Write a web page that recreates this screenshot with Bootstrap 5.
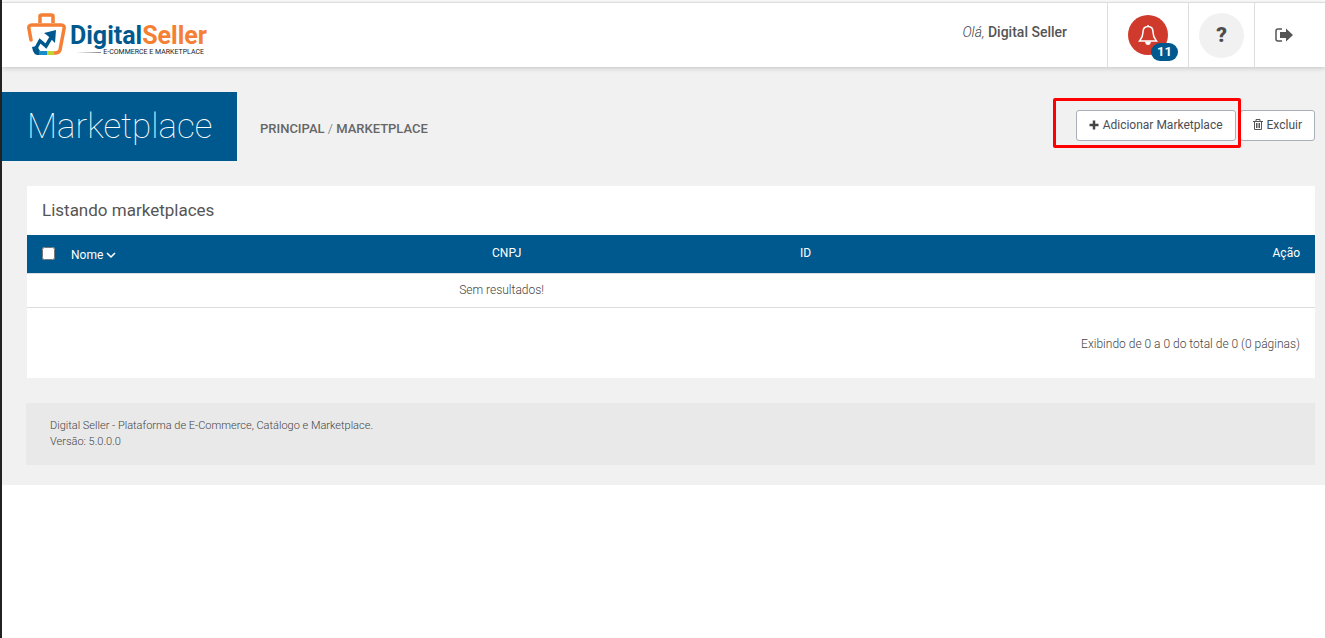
<!DOCTYPE html>
<html lang="pt-br">
<head>
<meta charset="utf-8">
<meta name="viewport" content="width=device-width, initial-scale=1">
<title>Marketplace - Digital Seller</title>
<link href="https://cdn.jsdelivr.net/npm/bootstrap@5.3.0/dist/css/bootstrap.min.css" rel="stylesheet">
<style>
:root { --ds-blue: #00598e; --ds-orange: #f57f34; --ds-line: #ddd; }
body { font-family: Roboto, "Liberation Sans", sans-serif; font-size: 12px; font-weight: 300; line-height: 16px; color: #444; background: #fff; border-left: 2px solid #222; padding-top: 2px; min-height: 100vh; }
.top-bar { height: 65px; border-top: 1px solid var(--ds-line); box-shadow: 0 1px 5px rgba(0,0,0,.2); }
.brand-link { margin: 7px 0 0 24px; height: 46px; }
.brand-text { padding-top: 13px; }
.brand-name { font-family: Roboto, sans-serif; font-size: 25px; line-height: 25px; font-weight: 700; color: var(--ds-blue); }
.brand-name span { color: var(--ds-orange); }
.brand-tag { font-size: 7px; line-height: 8px; font-weight: 400; color: #222; padding-right: 3px; }
.brand-rule { height: 1px; flex: 1; margin: 0 2px 0 5px; background: linear-gradient(to right, transparent, #888); }
.greeting { font-size: 14px; line-height: 20px; padding: 19px 40px 0 0; }
.greeting strong { font-weight: 500; color: #555; }
.top-cell { border-left: 1px solid var(--ds-line); }
.cell-bell { width: 81px; } .cell-help { width: 66px; } .cell-exit { width: 71px; padding-right: 12px; }
.round-btn { border: 0; border-radius: 50%; padding: 0; }
.bell-btn { width: 40px; height: 40px; background: #cf3a2c; }
.bell-count { left: 23px; top: 28px; width: 27px; height: 18px; font-size: 13px; line-height: 18px; font-weight: 700; padding: 0; background: var(--ds-blue); }
.help-btn { width: 45px; height: 45px; background: #f1f1f1; color: #4d4d4d; font-size: 21px; font-weight: 900; line-height: 45px; }
.page-area { background: #f1f1f1; padding: 25px 10px 20px 0; }
.page-title { background: var(--ds-blue); color: #fff; font-size: 35px; font-weight: 100; line-height: 69px; width: 235px; padding-left: 25px; }
.crumbs { font-size: 13px; font-weight: 500; color: #666; margin: 4px 0 0 23px; }
.crumbs a { color: inherit; }
.tools { padding-bottom: 2px; }
.tool-btn { height: 31px; padding: 0 12px 2px; font-size: 12px; line-height: 28px; font-weight: 400; color: #4b4d52; background: #fff; border: 1px solid #a9afbb; border-radius: 3px; }
.tool-btn:hover { background: #f6f6f6; border-color: #a9afbb; }
.highlight { inset: -12px -5px -7px -23px; border: 3px solid #f00; border-radius: 2px; z-index: 2; pointer-events: none; }
.panel { margin: 25px 0 0 25px; background: #fff; }
.panel h2 { font-size: 17px; line-height: 49px; font-weight: 400; margin: 0; padding-left: 15px; color: #555; }
.list-table { table-layout: fixed; width: 100%; }
.list-table th { height: 38px; background: var(--ds-blue); color: #fff; font-weight: 400; padding: 0 15px 2px; }
.list-table td { height: 34px; border: 1px solid var(--ds-line); border-width: 1px 0; padding: 0; }
.list-table th:first-child { padding-bottom: 0; }
.list-table th:first-child input { width: 13px; height: 13px; display: block; margin: 0; }
.list-table th.col-name { padding: 2px 0 0 8px; }
.list-table th a { color: inherit; }
.result-count { padding: 28px 15px 26px; text-align: right; }
.foot { margin: 25px 0 0 24px; padding: 15px 24px; background: #e9e9e9; font-size: 11px; }
</style>
</head>
<body>
<header class="top-bar d-flex bg-white position-relative">
  <a href="#" class="brand-link d-flex text-decoration-none" aria-label="Digital Seller">
    <svg width="40" height="46" viewBox="0 0 40 46" fill="none" aria-hidden="true">
      <path d="M14 13V6Q14 5 16 5H25Q27 5 27 6V13" stroke="#f57f34" stroke-width="3.500"/>
      <path d="M5 30L3 19Q2 15 6 15H35Q39 15 38 19L34 40Q33 43 29 43H28" stroke="#f57f34" stroke-width="3.500" stroke-linecap="round"/>
      <path d="M9 40L14 31L20 36L26 26" stroke="#00598e" stroke-width="3.500"/>
      <path d="M18 23L30 20L29 33L25 29L22 26Z" fill="#00598e"/>
      <path d="M6 37L11 36L14 41V45H11Q8 44 7 41Z" fill="#00598e"/>
      <path d="M13 41H21V45H13Z" fill="#168dc9"/><path d="M21 41H28V45H21Z" fill="#bdd62f"/>
    </svg>
    <span class="brand-text d-flex flex-column ms-1">
      <span class="brand-name">Digital<span>Seller</span></span>
      <span class="d-flex align-items-center"><span class="brand-rule"></span><span class="brand-tag">E-COMMERCE E MARKETPLACE</span></span>
    </span>
  </a>
  <div class="greeting ms-auto"><em>Olá,</em> <strong>Digital Seller</strong></div>
  <div class="top-cell cell-bell d-flex align-items-center justify-content-center">
    <button type="button" class="round-btn bell-btn position-relative" aria-label="Notificações">
      <svg width="20" height="22" viewBox="0 0 20 22" fill="none" stroke="#fff" stroke-width="1.5" aria-hidden="true"><path d="M10 2.500C6.500 2.500 5 5 5 8C5 13 3.500 14.500 1.500 17H18.500C16.500 14.500 15 13 15 8C15 5 13.500 2.500 10 2.500ZM10 1V3"/><path d="M7 17.500H13Q12.500 21 10 21Q7.500 21 7 17.500Z" fill="#fff" stroke="none"/></svg>
      <span class="bell-count badge rounded-pill position-absolute">11</span>
    </button>
  </div>
  <div class="top-cell cell-help d-flex align-items-center justify-content-center">
    <button type="button" class="round-btn help-btn">?</button>
  </div>
  <a href="#" class="top-cell cell-exit d-flex align-items-center justify-content-center" aria-label="Sair">
    <svg width="18" height="14" viewBox="0 0 18 14" aria-hidden="true"><path d="M7 1H3Q1 1 1 3V11Q1 13 3 13H7" fill="none" stroke="#555" stroke-width="1.500"/><path d="M5 4H11V0.500L18 7L11 13.500V10H5Z" fill="#555"/></svg>
  </a>
</header>
<main class="page-area">
  <div class="d-flex align-items-center">
    <h1 class="page-title m-0">Marketplace</h1>
    <nav class="crumbs" aria-label="Trilha"><a href="#" class="text-decoration-none">PRINCIPAL</a> <span class="fw-light">/</span> <a href="#" class="text-decoration-none">MARKETPLACE</a></nav>
    <div class="tools d-flex gap-1 ms-auto">
      <div class="position-relative">
        <button type="button" class="btn tool-btn d-flex align-items-center"><svg class="me-1" width="10" height="10" viewBox="0 0 10 10" aria-hidden="true"><path d="M5 0.500V9.500M0.500 5H9.500" stroke="#444" stroke-width="2.500"/></svg>Adicionar Marketplace</button>
        <span class="highlight position-absolute"></span>
      </div>
      <button type="button" class="btn tool-btn d-flex align-items-center"><svg class="me-1" width="10" height="11" viewBox="0 0 10 11" fill="none" stroke="#555" aria-hidden="true"><path d="M0 2.500H10M3 2.500V.5H7V2.500M1.500 2.500V10.500H8.500V2.500M3.500 4V9M5 4V9M6.500 4V9"/></svg>Excluir</button>
    </div>
  </div>
  <section class="panel">
    <h2>Listando marketplaces</h2>
    <table class="list-table">
      <colgroup><col style="width:2.8%"><col style="width:24.5%"><col style="width:19.9%"><col style="width:26.5%"><col style="width:26.3%"></colgroup>
      <thead><tr>
        <th><input type="checkbox" aria-label="Selecionar todos"></th>
        <th class="col-name"><a href="#" class="text-decoration-none">Nome <svg width="10" height="8" viewBox="0 0 10 8" fill="none" stroke="#fff" stroke-width="1.500" aria-hidden="true"><path d="M1 1L5 5L9 1"/></svg></a></th>
        <th class="text-center">CNPJ</th><th class="text-center">ID</th><th class="text-end">Ação</th>
      </tr></thead>
      <tbody><tr><td colspan="4" class="text-center">Sem resultados!</td><td></td></tr></tbody>
    </table>
    <div class="result-count">Exibindo de 0 a 0 do total de 0 (0 páginas)</div>
  </section>
  <footer class="foot">Digital Seller - Plataforma de E-Commerce, Catálogo e Marketplace.<br>Versão: 5.0.0.0</footer>
</main>
<script src="https://cdn.jsdelivr.net/npm/bootstrap@5.3.0/dist/js/bootstrap.bundle.min.js"></script>
</body>
</html>
